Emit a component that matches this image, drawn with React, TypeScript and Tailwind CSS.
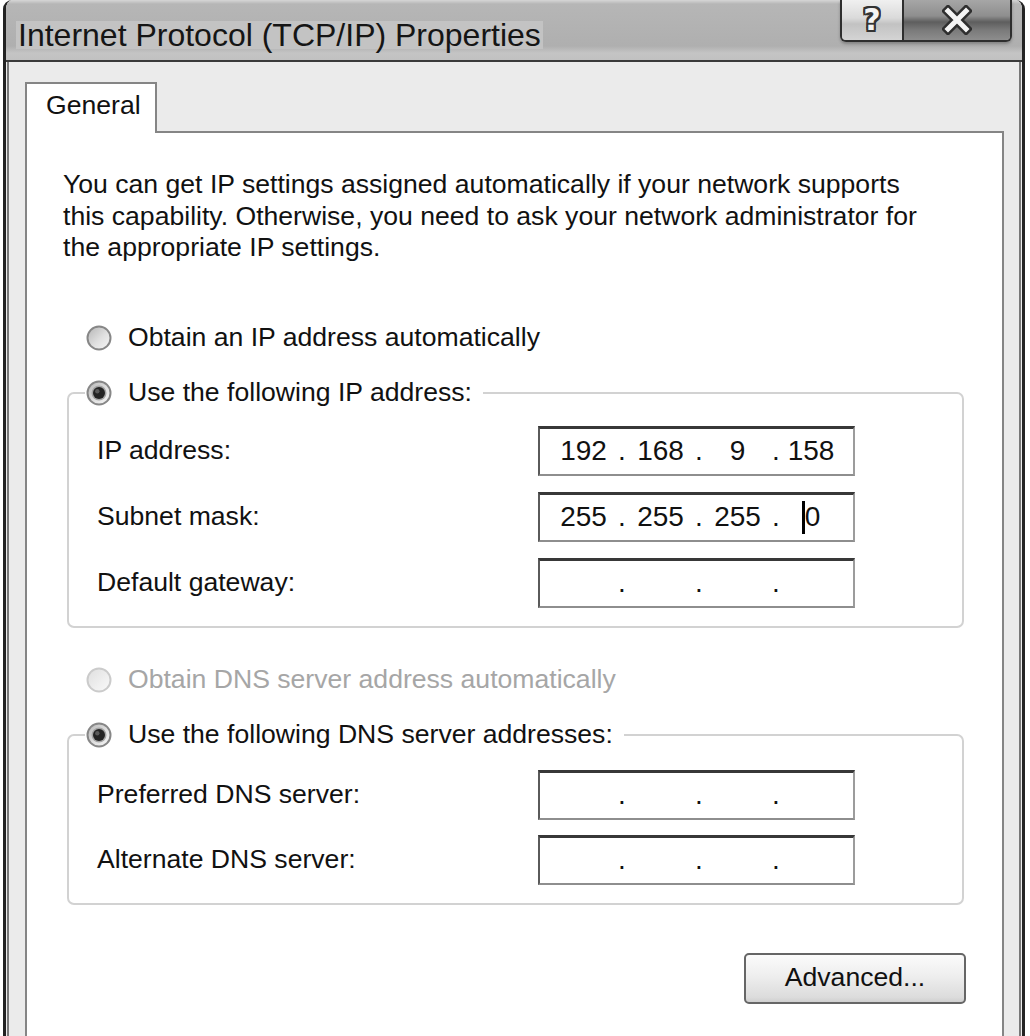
import React, { useId } from "react";

function Radio({ checked = false, disabled = false }: { checked?: boolean; disabled?: boolean }) {
  const id = "r" + useId().replace(/[^a-zA-Z0-9]/g, "");
  const ring = disabled ? "#cbcbcb" : "#878787";
  return (
    <svg width="26" height="26" viewBox="0 0 26 26" className="shrink-0">
      <defs>
        <linearGradient id={id} x1="0" y1="0" x2="1" y2="1">
          <stop offset="0" stopColor={disabled ? "#dedede" : "#b4b4b4"} />
          <stop offset="0.55" stopColor={disabled ? "#eeeeee" : "#e0e0e0"} />
          <stop offset="1" stopColor={disabled ? "#fafafa" : "#f7f7f7"} />
        </linearGradient>
      </defs>
      <circle cx="13" cy="13" r="11.5" fill={`url(#${id})`} stroke={ring} strokeWidth="2" />
      {checked && (
        <>
          <circle cx="13" cy="13" r="7.5" fill="#a4a4a4" />
          <circle cx="13" cy="13" r="6" fill="#242424" />
          <circle cx="11.3" cy="11.3" r="2.2" fill="#5a5a5a" />
        </>
      )}
    </svg>
  );
}

function IpField({ octets, caret = false }: { octets: string[]; caret?: boolean }) {
  return (
    <div className="w-[317px] h-[50px] shrink-0 bg-white border-t-[3px] border-l-2 border-r-2 border-b-2 border-t-[#383838] border-l-[#5a5a5a] border-r-[#9c9c9c] border-b-[#8e8e8e] flex items-center pl-[8px] text-[28px] leading-none text-[#111]">
      <span className="w-[71px] text-center">{octets[0]}</span>
      <span className="w-[6px] flex justify-center">.</span>
      <span className="w-[71px] text-center">{octets[1]}</span>
      <span className="w-[6px] flex justify-center">.</span>
      <span className="w-[71px] text-center">{octets[2]}</span>
      <span className="w-[6px] flex justify-center">.</span>
      <span className="w-[71px] flex justify-center items-center pr-[7px]">
        {caret && <span className="inline-block w-[3px] h-[33px] bg-black" />}
        {octets[3]}
      </span>
    </div>
  );
}

function Row({ label, octets, caret }: { label: string; octets: string[]; caret?: boolean }) {
  return (
    <div className="flex items-center h-[50px]">
      <div className="w-[469px] pl-[28px] whitespace-nowrap">{label}</div>
      <IpField octets={octets} caret={caret} />
    </div>
  );
}

function Group({
  title,
  children,
  pt,
}: {
  title: string;
  children: React.ReactNode;
  pt: string;
}) {
  return (
    <fieldset className="ml-[40px] mr-[38px] border-2 border-[#d2d2d2] rounded-[7px] pb-[18px]">
      <legend className="ml-[16px]">
        <div className="flex items-center h-[32px] pl-[1px] pr-[11px] gap-[16px] whitespace-nowrap">
          <Radio checked />
          <span>{title}</span>
        </div>
      </legend>
      <div className={`flex flex-col ${pt}`}>{children}</div>
    </fieldset>
  );
}

export default function App() {
  const empty = ["", "", "", ""];
  return (
    <div className="w-[1030px] h-[1036px] overflow-hidden bg-white pl-[3px] [font-family:'Liberation_Sans',Arial,sans-serif] text-[26.6px] text-[#111]">
      <div className="w-[1022px] h-full border-x-[3px] border-[#222] rounded-tl-[9px] rounded-tr-[9px] bg-[#ebebeb] flex flex-col overflow-hidden">
        {/* Title bar */}
        <div className="h-[62px] shrink-0 border-b-2 border-[#3a3a3a] bg-[linear-gradient(to_bottom,#d6d6d6_0px,#b6b6b6_4px,#afafaf_46px,#c4c4c4_53px,#c1c1c1_60px)] flex justify-between">
          <div className="pl-[10px] pt-[10px] flex items-center">
            <span className="px-[2px] bg-[#c3c3c3] text-[32px] leading-[28px] text-[#151515] whitespace-nowrap">
              Internet Protocol (TCP/IP) Properties
            </span>
          </div>
          <div className="self-start mr-[10px] h-[42px] flex border-2 border-t-0 border-[#2e2e2e] rounded-b-[6px] overflow-hidden shadow-[0_2px_3px_rgba(0,0,0,0.25)]">
            <div className="w-[62px] h-full border-r-2 border-[#2e2e2e] bg-[linear-gradient(to_bottom,#f0f0f0_0%,#dadada_45%,#c2c2c2_60%,#d4d4d4_100%)] flex items-center justify-center">
              <span className="text-[30px] font-bold leading-none text-[#f4f4f4] [font-family:'DejaVu_Sans',sans-serif] [text-shadow:2px_0_0_#333,-2px_0_0_#333,0_2px_0_#333,0_-2px_0_#333,2px_2px_0_#333,-2px_-2px_0_#333,2px_-2px_0_#333,-2px_2px_0_#333]">
                ?
              </span>
            </div>
            <div className="w-[106px] h-full bg-[linear-gradient(to_bottom,#a6a6a6_0%,#8e8e8e_40%,#5e5e5e_55%,#7a7a7a_75%,#8d8d8d_100%)] flex items-center justify-center">
              <svg width="30" height="30" viewBox="0 0 30 30">
                <path d="M6 6 L24 24 M24 6 L6 24" stroke="#2e2e2e" strokeWidth="10" strokeLinecap="square" />
                <path d="M6 6 L24 24 M24 6 L6 24" stroke="#f4f4f4" strokeWidth="5" strokeLinecap="square" />
              </svg>
            </div>
          </div>
        </div>

        {/* Body */}
        <div className="flex-1 mx-[1px] border-x-2 border-[#787878] pl-[16px] pr-[15px] pt-[20px] flex flex-col">
          {/* Tabs */}
          <div className="flex h-[51px] shrink-0">
            <div className="w-[132px] h-full bg-white border-2 border-b-0 border-[#858585] pl-[19px] pb-[6px] flex items-center">
              General
            </div>
            <div className="flex-1 h-full border-b-2 border-[#858585]" />
          </div>

          {/* Panel */}
          <div className="flex-1 bg-white border-x-2 border-[#858585] flex flex-col">
            <p className="pl-[36px] pt-[36px] leading-[31.5px] whitespace-nowrap">
              <span className="block">You can get IP settings assigned automatically if your network supports</span>
              <span className="block">this capability. Otherwise, you need to ask your network administrator for</span>
              <span className="block">the appropriate IP settings.</span>
            </p>

            <div className="mt-[58px] ml-[59px] flex items-center h-[32px] gap-[16px] whitespace-nowrap">
              <Radio />
              <span>Obtain an IP address automatically</span>
            </div>

            <div className="mt-[23px]">
              <Group title="Use the following IP address:" pt="pt-[17px] gap-[16px]">
                <Row label="IP address:" octets={["192", "168", "9", "158"]} />
                <Row label="Subnet mask:" octets={["255", "255", "255", "0"]} caret />
                <Row label="Default gateway:" octets={empty} />
              </Group>
            </div>

            <div className="mt-[36px] ml-[59px] flex items-center h-[32px] gap-[16px] whitespace-nowrap text-[#a6a6a6]">
              <Radio disabled />
              <span>Obtain DNS server address automatically</span>
            </div>

            <div className="mt-[23px]">
              <Group title="Use the following DNS server addresses:" pt="pt-[19px] gap-[15px]">
                <Row label="Preferred DNS server:" octets={empty} />
                <Row label="Alternate DNS server:" octets={empty} />
              </Group>
            </div>

            <div className="mt-[48px] self-end mr-[36px] w-[222px] h-[51px] border-2 border-[#666] rounded-[5px] bg-[linear-gradient(to_bottom,#fbfbfb_0%,#eeeeee_45%,#dcdcdc_90%,#cfcfcf_100%)] flex items-center justify-center">
              Advanced...
            </div>
          </div>
        </div>
      </div>
    </div>
  );
}
